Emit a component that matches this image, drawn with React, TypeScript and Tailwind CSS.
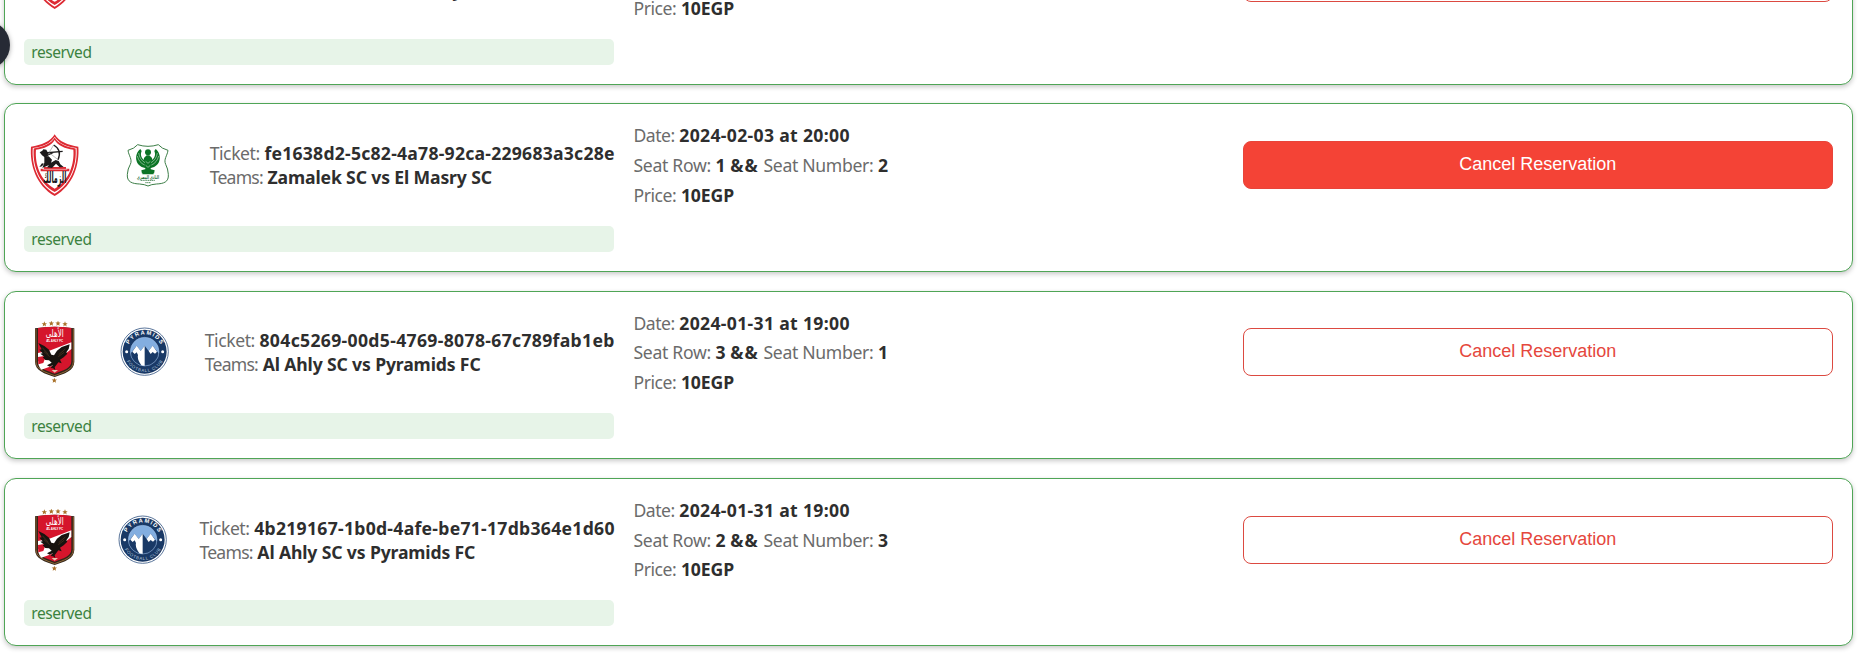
import type { ReactNode } from "react";

type Team = "zamalek" | "masry" | "ahly" | "pyramids";

interface Reservation {
  id: string;
  idTracking: string;
  home: Team;
  away: Team;
  date: string;
  row: number;
  seat: number;
  filled?: boolean;
}

const NAMES: Record<Team, string> = {
  zamalek: "Zamalek SC",
  masry: "El Masry SC",
  ahly: "Al Ahly SC",
  pyramids: "Pyramids FC",
};

const RESERVATIONS: Reservation[] = [
  {
    id: "804c5269-00d5-4769-8078-29c789fab1ab",
    idTracking: "tracking-[0.32px]",
    home: "zamalek",
    away: "masry",
    date: "2024-02-03 at 20:00",
    row: 1,
    seat: 1,
  },
  {
    id: "fe1638d2-5c82-4a78-92ca-229683a3c28e",
    idTracking: "tracking-[0.24px]",
    home: "zamalek",
    away: "masry",
    date: "2024-02-03 at 20:00",
    row: 1,
    seat: 2,
    filled: true,
  },
  {
    id: "804c5269-00d5-4769-8078-67c789fab1eb",
    idTracking: "tracking-[0.33px]",
    home: "ahly",
    away: "pyramids",
    date: "2024-01-31 at 19:00",
    row: 3,
    seat: 1,
  },
  {
    id: "4b219167-1b0d-4afe-be71-17db364e1d60",
    idTracking: "tracking-[0.28px]",
    home: "ahly",
    away: "pyramids",
    date: "2024-01-31 at 19:00",
    row: 2,
    seat: 3,
  },
];

function Crest({ children }: { children: ReactNode }) {
  return (
    <svg viewBox="0 0 186 186" className="size-[62px] shrink-0">
      {children}
    </svg>
  );
}

const SHIELD = "M92 1C80 22 52 34 21 38C17 92 36 154 92 186C148 154 167 92 163 38C132 34 104 22 92 1Z";

function Zamalek() {
  return (
    <Crest>
      <path d={SHIELD} fill="#dd2a33" />
      <path d={SHIELD} fill="#fff" transform="translate(92 93) scale(.925) translate(-92 -93)" />
      <path d={SHIELD} fill="#dd2a33" transform="translate(92 92) scale(.885) translate(-92 -93)" />
      <path d={SHIELD} fill="#fff" transform="translate(92 91) scale(.79) translate(-92 -93)" />
      <path d="M60 99h66v5h10v8H50v-8h10z" fill="#dd2a33" />
      <path d="M56 106h74" stroke="#fff" strokeWidth="1.5" />
      <g fill="#1d1b1c">
        <path d="M47 55l8-5 3-4 9 1 3 6 7 3-5 3-1 8-9 3-8-6z" />
        <path d="M61 67l13 0 10 10-3 9 14-8 9 3 5 10 10 8-12 1-11-11-12 13-15-2 6-7-20 9 6-16z" />
        <path d="M54 88l6 1-6 8-8 2z" />
      </g>
      <path d="M61 57L116 52M66 66l25-12" stroke="#1d1b1c" strokeWidth="4" />
      <path d="M89 33Q115 48 102 77" fill="none" stroke="#1d1b1c" strokeWidth="4" />
      <path d="M89 33L75 56 102 77" fill="none" stroke="#777" strokeWidth="1.5" />
      <text
        x="0"
        y="0"
        transform="translate(92 146) scale(1 1.5)"
        textAnchor="middle"
        textLength="70"
        lengthAdjust="spacingAndGlyphs"
        fontFamily="DejaVu Sans, sans-serif"
        fontWeight="700"
        fontSize="32"
        fill="#1d1b1c"
      >
        الزمالك
      </text>
    </Crest>
  );
}

function Masry() {
  return (
    <Crest>
      <path
        d="M62 32Q93 42 124 32Q134 44 153 49C151 65 139 76 146 91Q153 104 154 121C156 145 139 149 118 150Q103 151 93 156Q83 151 68 150C47 149 29 145 31 121Q32 104 40 91C47 76 35 65 33 49Q52 44 62 32Z"
        fill="#fff"
        stroke="#3b7d46"
        strokeWidth="3"
      />
      <g fill="#0c7426">
        <circle cx="93" cy="55" r="9" />
        <path d="M70 45C50 61 53 97 85 102L89 82C75 78 68 64 74 51Z" />
        <path d="M116 45C136 61 133 97 101 102L97 82C111 78 118 64 112 51Z" />
        <path d="M89 64h8l8 8 3 18-8 16 10 15H76l10-15-8-16 3-18z" />
        <path d="M73 109l14-4v10l-12 4zM113 109l-14-4v10l12 4z" />
      </g>
      <path
        d="M61 66q5 20 22 27M65 57q3 20 19 29M125 66q-5 20-22 27M121 57q-3 20-19 29M86 82l7 6 7-6M86 94l7 6 7-6"
        fill="none"
        stroke="#cfe4d1"
        strokeWidth="1.7"
      />
      <text
        x="93"
        y="134"
        textAnchor="middle"
        textLength="66"
        lengthAdjust="spacingAndGlyphs"
        fontFamily="DejaVu Sans, sans-serif"
        fontWeight="700"
        fontSize="16"
        fill="#246e35"
      >
        النادي المصري
      </text>
      <path d="M71 139h44M85 146h17" stroke="#4c8757" strokeWidth="3" strokeDasharray="4 1.5" />
    </Crest>
  );
}

const STAR = "M0-8L2.3-2.6 8-2.3 3.6 1.5 5 7.2 0 4 -5 7.2 -3.6 1.5 -8-2.3 -2.3-2.6Z";

function Ahly() {
  return (
    <Crest>
      <g fill="#a9712a">
        <path d={STAR} transform="translate(61 9)" />
        <path d={STAR} transform="translate(82 7)" />
        <path d={STAR} transform="translate(102 7)" />
        <path d={STAR} transform="translate(123 9)" />
        <path d={STAR} transform="translate(91 178)" />
      </g>
      <path d="M33 22Q92 12 151 22V122C151 149 121 158 92 168C63 158 33 149 33 122Z" fill="#33251a" />
      <path d="M36 24V122C36 146 65 154 92 164C119 154 148 146 148 122V24" fill="none" stroke="#b98a45" strokeWidth="2" />
      <path d="M42 21Q92 13 142 21V121C142 142 117 149 92 158C67 149 42 142 42 121Z" fill="#d5152c" />
      <path d="M142 64V84L112 108 92 132 52 146Q43 138 42 121L56 118 42 114V96L80 88Z" fill="#fff" />
      <path d="M42 108L66 104 58 126 43 130Z" fill="#d5152c" />
      <path d="M83 147h19l-10 8z" fill="#e7c3b0" />
      <text
        x="92"
        y="48"
        textAnchor="middle"
        textLength="54"
        lengthAdjust="spacingAndGlyphs"
        fontFamily="DejaVu Sans, sans-serif"
        fontSize="31"
        fill="#fff"
      >
        الأهلي
      </text>
      <text
        x="92"
        y="62"
        textAnchor="middle"
        textLength="50"
        lengthAdjust="spacingAndGlyphs"
        fontFamily="Liberation Sans, sans-serif"
        fontWeight="700"
        fontSize="9"
        fill="#fff"
      >
        AL AHLY FC
      </text>
      <path
        d="M43 66L61 75 75 86 82 101 90 103 99 89 113 78 137 70 134 84 127 94 130 98 119 109 108 116 113 127 103 124 92 139 94 147 87 142 80 141 87 132 77 137 69 133 83 125 75 118 64 117 56 109 61 107 49 98 56 97 46 86 53 85Z"
        fill="#17130f"
      />
      <path d="M55 80l18 20M60 92l17 15M124 84l-20 17M120 94l-17 13" stroke="#67472b" strokeWidth="1.5" />
    </Crest>
  );
}

function Pyramids({ id }: { id: string }) {
  return (
    <Crest>
      <defs>
        <path id={`${id}-top`} d="M40 92A52 52 0 0 1 144 92" />
        <path id={`${id}-bottom`} d="M31 92A61 61 0 0 0 153 92" />
        <clipPath id={`${id}-disc`}>
          <circle cx="92" cy="92" r="43" />
        </clipPath>
      </defs>
      <circle cx="92" cy="92" r="71" fill="#fff" stroke="#395985" strokeWidth="2.5" />
      <circle cx="92" cy="92" r="66" fill="#193966" />
      <circle cx="92" cy="92" r="43" fill="#83aee0" />
      <g clipPath={`url(#${id}-disc)`}>
        <path d="M34 118L68 74 80 90 92 74 104 90 116 74 150 118V140H34Z" fill="#193966" />
        <path d="M68 74L80 90 92 74V140H88Q68 118 72 102L68 94 62 99 55 92Z" fill="#fff" />
        <path d="M116 74L129 92 123 98 116 93 110 99 104 90Z" fill="#fff" />
      </g>
      <circle cx="92" cy="92" r="43" fill="none" stroke="#9fbde2" strokeWidth="1.5" />
      <circle cx="38" cy="92" r="4.5" fill="#fff" />
      <circle cx="146" cy="92" r="4.5" fill="#fff" />
      <text fontFamily="Liberation Sans, sans-serif" fontWeight="700" fontSize="17" fill="#fff" textAnchor="middle">
        <textPath href={`#${id}-top`} startOffset="50%" textLength="118">
          PYRAMIDS
        </textPath>
      </text>
      <text fontFamily="Liberation Sans, sans-serif" fontSize="13" fill="#b8c9df" textAnchor="middle">
        <textPath href={`#${id}-bottom`} startOffset="50%" textLength="132">
          FOOTBALL CLUB
        </textPath>
      </text>
    </Crest>
  );
}

function Logo({ team, id }: { team: Team; id: string }) {
  if (team === "zamalek") return <Zamalek />;
  if (team === "masry") return <Masry />;
  if (team === "ahly") return <Ahly />;
  return <Pyramids id={id} />;
}

function Value({ className = "", children }: { className?: string; children: ReactNode }) {
  return <span className={`font-bold text-[#2e2e2e] ${className}`}>{children}</span>;
}

function TicketCard({ item, index }: { item: Reservation; index: number }) {
  return (
    <article className="grid grid-cols-3 gap-x-[19.2px] gap-y-[19px] rounded-[12px] border border-[#4fa556] bg-white p-[19.2px] pb-[19px] shadow-[0_2px_5px_rgba(0,0,0,0.22)]">
      <div className="-mr-[0.5px] flex h-[83.4px] items-center justify-between">
        <Logo team={item.home} id={`home-${index}`} />
        <Logo team={item.away} id={`away-${index}`} />
        <div className="leading-6 whitespace-nowrap">
          <p>
            <span className="tracking-[-0.43px]">Ticket:</span> <Value className={item.idTracking}>{item.id}</Value>
          </p>
          <p>
            <span className="tracking-[-0.77px]">Teams:</span>{" "}
            <Value className="tracking-[-0.14px]">
              {NAMES[item.home]} vs {NAMES[item.away]}
            </Value>
          </p>
        </div>
      </div>
      <div className="flex h-[83.4px] flex-col justify-between leading-6 whitespace-nowrap">
        <p>
          <span className="tracking-[-0.5px]">Date:</span> <Value className="tracking-[0.33px]">{item.date}</Value>
        </p>
        <p>
          <span className="tracking-[-0.3px]">Seat Row:</span>{" "}
          <Value>
            {item.row} <span className="tracking-[1.2px]">&&</span>
          </Value>{" "}
          <span className="tracking-[-0.33px]">Seat Number:</span> <Value>{item.seat}</Value>
        </p>
        <p>
          <span className="tracking-[-0.45px]">Price:</span> <Value className="tracking-[-0.1px]">10EGP</Value>
        </p>
      </div>
      <div className="flex h-[83.4px] items-center">
        <button
          type="button"
          className={`h-12 w-full rounded-lg border pb-px font-['Liberation_Sans',sans-serif] text-[18px] ${
            item.filled ? "border-[#e8443a] bg-[#f44336] text-white" : "border-[#dc4a41] bg-white text-[#e5473d]"
          }`}
        >
          Cancel Reservation
        </button>
      </div>
      <div className="h-[26px] rounded-[5px] bg-[#e7f4e8] px-[7px] text-[15.5px] leading-[27px] tracking-[-0.4px] text-[#3c823f]">
        reserved
      </div>
    </article>
  );
}

export default function App() {
  return (
    <main className="relative h-[653px] overflow-hidden bg-white font-['Noto_Sans',sans-serif] text-[17.6px] text-[#6b6b6b]">
      <section className="-mt-[84px] flex flex-col gap-[18.7px] pr-[7px] pl-1">
        {RESERVATIONS.map((item, index) => (
          <TicketCard key={index} item={item} index={index} />
        ))}
      </section>
      <div className="absolute top-[21px] -left-[38px] size-12 rounded-full bg-[#262a35] shadow-[0_1px_5px_rgba(0,0,0,0.35)]" />
    </main>
  );
}
